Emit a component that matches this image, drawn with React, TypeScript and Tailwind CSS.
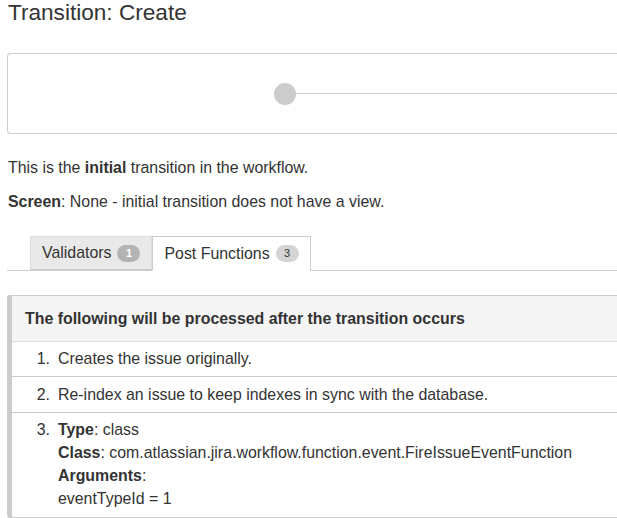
import React from "react";

const rows = [
  { n: 1, text: "Creates the issue originally.", h: "h-[35px]" },
  { n: 2, text: "Re-index an issue to keep indexes in sync with the database.", h: "h-[36px]" },
];

export default function App() {
  return (
    <div className="w-full h-[518px] overflow-hidden bg-white text-[#333] font-['Liberation_Sans',Arial,sans-serif]">
      <div className="w-[660px] pl-[7px]">
        <h1 className="text-[22.6px] leading-[26px] pl-[1px]">Transition: Create</h1>

        <div className="mt-[27px] h-[81px] border border-r-0 border-[#ccc] rounded-l-[4px] flex items-center pl-[266px]">
          <div className="w-[22px] h-[22px] rounded-full bg-[#ccc] shrink-0" />
          <div className="h-px flex-1 bg-[#ccc]" />
        </div>

        <p className="mt-[24px] text-[15.9px] leading-[19px] pl-[1px]">
          This is the <b>initial</b> transition in the workflow.
        </p>
        <p className="mt-[15px] text-[15.9px] leading-[19px] pl-[1px]">
          <b>Screen</b>: None - initial transition does not have a view.
        </p>

        <div className="mt-[25px] flex border-b border-[#ccc] pl-[23px] text-[15.9px]">
          <div className="h-[34px] -mb-px flex items-center gap-[6px] pl-[11px] pr-[11px] bg-[#e9e9e9] border border-[#ddd] border-b-[#ccc]">
            <span>Validators</span>
            <span className="h-[17px] w-[23px] rounded-full bg-[#b3b3b3] text-white text-[11px] font-bold flex items-center justify-center">1</span>
          </div>
          <div className="h-[35px] -mb-px flex items-center gap-[6px] px-[11px] bg-white border border-[#ccc] border-b-white">
            <span>Post Functions</span>
            <span className="h-[17px] w-[23px] rounded-full bg-[#d4d4d4] text-[#333] text-[11px] flex items-center justify-center">3</span>
          </div>
        </div>

        <div className="mt-[24px] border border-[#ccc] border-l-[5px] border-r-0 rounded-l-[3px] text-[15.9px]">
          <div className="h-[46px] bg-[#f5f5f5] border-b border-[#ddd] flex items-center pl-[13px] font-bold">
            The following will be processed after the transition occurs
          </div>
          {rows.map((r) => (
            <div key={r.n} className={`${r.h} border-b border-[#ccc] flex items-center`}>
              <span className="w-[46px] text-right pr-[8px]">{r.n}.</span>
              <span>{r.text}</span>
            </div>
          ))}
          <div className="flex pt-[5px] pb-[7px] leading-[23px]">
            <span className="w-[46px] text-right pr-[8px] shrink-0">3.</span>
            <div>
              <div><b>Type</b>: class</div>
              <div><b>Class</b>: com.atlassian.jira.workflow.function.event.FireIssueEventFunction</div>
              <div><b>Arguments</b>:</div>
              <div>eventTypeId = 1</div>
            </div>
          </div>
        </div>
      </div>
    </div>
  );
}
